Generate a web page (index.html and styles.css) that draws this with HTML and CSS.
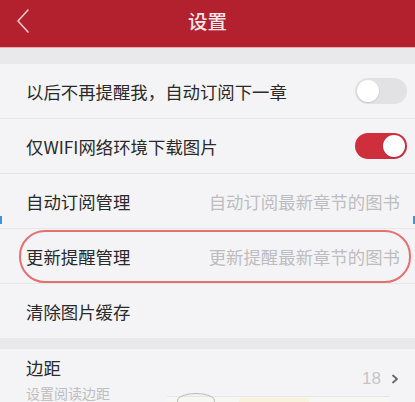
FILE: index.html
```html
<!DOCTYPE html>
<html lang="zh">
<head>
<meta charset="utf-8">
<title>设置</title>
<link rel="stylesheet" href="styles.css">
</head>
<body>
<div class="page">
  <header class="topbar">
    <div class="back">
      <svg width="16" height="26" viewBox="0 0 16 26"><path d="M13 2 L3 13 L13 24" fill="none" stroke="#f4c9cd" stroke-width="1.6" stroke-linecap="round" stroke-linejoin="round"/></svg>
    </div>
    <div class="title">设置</div>
    <div class="spacer"></div>
  </header>
  <div class="topline"></div>
  <div class="band band-top"></div>
  <section class="group">
    <div class="row row-toggle">
      <span class="label">以后不再提醒我，自动订阅下一章</span>
      <span class="switch"><span class="knob"></span></span>
    </div>
    <div class="row row-toggle">
      <span class="label">仅WIFI网络环境下载图片</span>
      <span class="switch on"><span class="knob"></span></span>
    </div>
    <div class="row row-value">
      <span class="label">自动订阅管理</span>
      <span class="value">自动订阅最新章节的图书</span>
    </div>
    <div class="row row-value">
      <span class="label">更新提醒管理</span>
      <span class="value">更新提醒最新章节的图书</span>
    </div>
    <div class="row">
      <span class="label">清除图片缓存</span>
    </div>
  </section>
  <div class="band band-mid"></div>
  <section class="group">
    <div class="row row-detail">
      <div class="texts">
        <span class="label">边距</span>
        <span class="sub">设置阅读边距</span>
      </div>
      <div class="detail">
        <span class="num">18</span>
        <svg width="8" height="10" viewBox="0 0 8 10"><path d="M2 1.5 L6 5 L2 8.5" fill="none" stroke="#666" stroke-width="1.8" stroke-linecap="round" stroke-linejoin="round"/></svg>
      </div>
    </div>
  </section>
  <div class="annot"></div>
  <div class="mark mark-left"></div>
  <div class="mark mark-right"></div>
  <div class="wm"><span class="wm-blob"></span><span class="wm-box"></span></div>
</div>
</body>
</html>
```
FILE: styles.css
```css
html, body {
  margin: 0;
  padding: 0;
  background: #f4f4f6;
}
body {
  font-family: "Noto Sans CJK SC", "Noto Sans", sans-serif;
  color: #333;
}
.page {
  position: relative;
  width: 415px;
  height: 402px;
  overflow: hidden;
}
.topbar {
  height: 47px;
  background: #b3212e;
  display: grid;
  grid-template-columns: 50px 1fr 50px;
  align-items: center;
}
.back {
  padding-left: 15px;
  display: flex;
  align-items: center;
  height: 100%;
  padding-bottom: 6px;
  box-sizing: border-box;
}
.title {
  text-align: center;
  color: #f8e6e8;
  font-size: 19.5px;
  font-weight: 500;
  padding-bottom: 6px;
}
.topline {
  height: 1px;
  background: #f1a7ad;
}
.band {
  background: #e9e9eb;
}
.band-top { height: 16px; }
.band-mid { height: 11px; }
.group {
  background: #f4f4f6;
}
.row {
  height: 54px;
  border-bottom: 1px solid #e7e7e9;
  display: flex;
  align-items: center;
  justify-content: space-between;
  padding: 0 8px 0 26px;
}
.row:last-child { border-bottom: none; }
.label {
  font-size: 17.4px;
  color: #2a2a2a;
}
.row-value { padding-right: 15px; }
.value {
  font-size: 17.4px;
  color: #bdbdbf;
}
.switch {
  position: relative;
  width: 52px;
  height: 26px;
  border-radius: 13px;
  background: #e2e2e4;
  box-sizing: border-box;
}
.switch .knob {
  position: absolute;
  top: 2px;
  left: 2px;
  width: 22px;
  height: 22px;
  border-radius: 50%;
  background: #fff;
  box-shadow: 0 1px 2px rgba(0,0,0,0.12);
}
.switch.on {
  background: #cf2f3d;
}
.switch.on .knob {
  left: 28px;
}
.row-detail {
  height: 60px;
  align-items: flex-start;
  padding-right: 16px;
}
.texts {
  display: flex;
  flex-direction: column;
  padding-top: 6px;
}
.texts .label { line-height: 26px; }
.sub {
  font-size: 14px;
  color: #bdbdbf;
  line-height: 24px;
}
.detail {
  display: flex;
  align-items: center;
  gap: 10px;
  padding-top: 20px;
}
.num {
  font-size: 17px;
  color: #c4c4c6;
  font-family: "Liberation Sans", "Noto Sans", sans-serif;
}
.annot {
  position: absolute;
  left: 19px;
  top: 230px;
  width: 392px;
  height: 53px;
  box-sizing: border-box;
  border: 2px solid #e47070;
  border-radius: 26px;
}
.mark {
  position: absolute;
  top: 216px;
  width: 2px;
  height: 8px;
  background: #3d92dc;
}
.mark-left { left: 0; }
.mark-right { right: 0; }
.wm {
  position: absolute;
  left: 167px;
  top: 396px;
  width: 223px;
  height: 10px;
  background: #f6f6f2;
  border-top: 1px solid #e6e6e6;
}
.wm-blob {
  position: absolute;
  left: 10px;
  top: -4px;
  width: 36px;
  height: 14px;
  border: 1.5px solid #bbb;
  border-radius: 50%;
  border-bottom: none;
}
.wm-box {
  position: absolute;
  left: 72px;
  top: 1px;
  width: 70px;
  height: 10px;
  background: #f7f3dc;
}
```
